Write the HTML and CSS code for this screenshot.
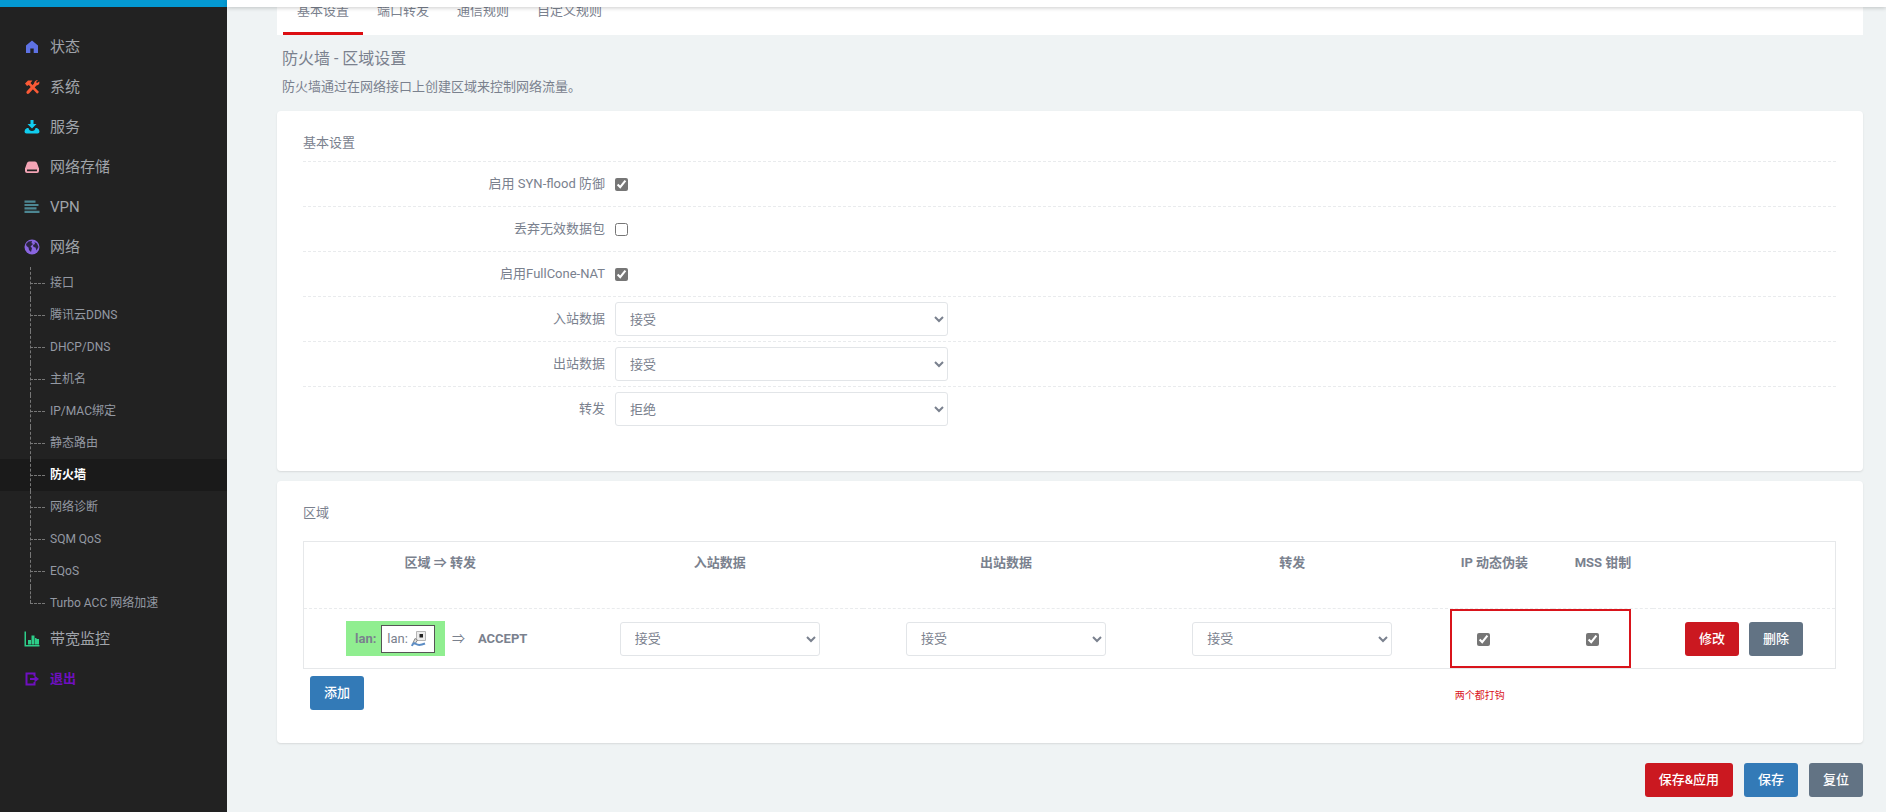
FILE: index.html
```html
<!DOCTYPE html>
<html lang="zh-CN">
<head>
  <meta charset="utf-8">
  <title>防火墙 - 区域设置</title>
  <link rel="stylesheet" href="styles.css">
</head>
<body>
  <header class="topbar">
    <div class="brand"></div>
    <div class="topbar-fill"></div>
  </header>
  <div class="wrapper">
    <aside class="sidebar">
      <ul class="menu">
        <li><a class="menu-link" href="#">
          <svg class="icon" viewBox="0 0 16 16" fill="#5e72e4"><path d="M8 1.500 2 6.500V14h4.300v-4.500h3.400V14H14V6.500z"/></svg>
          状态</a></li>
        <li><a class="menu-link" href="#">
          <svg class="icon" viewBox="0 0 16 16" fill="#fb5a36"><path d="M1 4.500 4 1.500h4.500L6.500 4l8.500 9-1.800 1.700L4.800 6 3 7z"/><path d="M14 1 12 3l1 1 2.300-1.500q.700 3.500-2.800 4L5 14.500q-1.500 1-2.500-.500-.500-1 .500-2l7-7.500Q10.500 1 14 1z"/></svg>
          系统</a></li>
        <li><a class="menu-link" href="#">
          <svg class="icon" viewBox="0 0 16 16" fill="#11cdef"><path d="M6.500 1h3v4h3L8 9.500 3.500 5h3zM3 9h1.500q.500 3 3.500 3t3.500-3H13q2.500 1 2.500 3.500 0 2-2 2h-11q-2 0-2-2Q.500 10 3 9z"/></svg>
          服务</a></li>
        <li><a class="menu-link" href="#">
          <svg class="icon" viewBox="0 0 16 16" fill="#f3a4b5"><path d="M5 2.500h6q1.500 0 2 1.500l2 5.500H1L3 4q.500-1.500 2-1.500z"/><path fill-rule="evenodd" d="M1 9h14v3q0 2-2 2H3q-2 0-2-2zM3 10.500V12.300h10v-1.800z"/></svg>
          网络存储</a></li>
        <li><a class="menu-link" href="#">
          <svg class="icon" viewBox="0 0 16 16" fill="#4d8793"><path d="M.500 1.500h11v2.200H.500zM.500 4.900h14v2.200H.500zM.500 8.300h12v2.200H.500zM.500 11.700h15v2.200H.500z"/></svg>
          VPN</a></li>
        <li>
          <a class="menu-link" href="#">
            <svg class="icon" viewBox="0 0 16 16"><circle cx="8" cy="8" r="7.500" fill="#8965e0"/><path fill="#2c2544" d="M2 5 4.500 2.500 8 2l-.500 2 1.500 1L6.500 7.500 8 9 7 13 5 11 4.500 8.500 2.500 7zM10.500 3l2.500 1.500L14.500 8l-2 3.500-1-3-2-.500-.500-2L11 5z"/></svg>
            网络</a>
          <ul class="submenu">
            <li><a href="#">接口</a></li>
            <li><a href="#">腾讯云DDNS</a></li>
            <li><a href="#">DHCP/DNS</a></li>
            <li><a href="#">主机名</a></li>
            <li><a href="#">IP/MAC绑定</a></li>
            <li><a href="#">静态路由</a></li>
            <li class="active"><a href="#">防火墙</a></li>
            <li><a href="#">网络诊断</a></li>
            <li><a href="#">SQM QoS</a></li>
            <li><a href="#">EQoS</a></li>
            <li><a href="#">Turbo ACC 网络加速</a></li>
          </ul>
        </li>
        <li><a class="menu-link" href="#">
          <svg class="icon" viewBox="0 0 16 16" fill="#2dce89"><path d="M.500.500H2v13.500h13.500v1.500H.500zM4 9h3v4.500H4zM7.500 4.500h3v9h-3zM11 7h1.500v6.500H11zM12.500 8h2.500v5.500h-2.500z"/></svg>
          带宽监控</a></li>
        <li><a class="menu-link logout" href="#">
          <svg class="icon" viewBox="0 0 16 16" fill="none" stroke="#6f0fc0" stroke-width="2"><path d="M10.500 5V2.500h-8v11h8V11M6 8h6"/><path d="M10.500 4.500v7L15 8z" fill="#6f0fc0" stroke="none"/></svg>
          退出</a></li>
      </ul>
    </aside>

    <main class="main">
      <nav class="tabs">
        <a class="active" href="#">基本设置</a>
        <a href="#">端口转发</a>
        <a href="#">通信规则</a>
        <a href="#">自定义规则</a>
      </nav>
      <h2 class="page-title">防火墙 - 区域设置</h2>
      <p class="page-descr">防火墙通过在网络接口上创建区域来控制网络流量。</p>

      <section class="card defaults">
        <h3>基本设置</h3>
        <div class="row">
          <label for="syn">启用 SYN-flood 防御</label>
          <input type="checkbox" id="syn" checked>
        </div>
        <div class="row">
          <label for="invalid">丢弃无效数据包</label>
          <input type="checkbox" id="invalid">
        </div>
        <div class="row">
          <label for="fullcone">启用FullCone-NAT</label>
          <input type="checkbox" id="fullcone" checked>
        </div>
        <div class="row">
          <label for="input">入站数据</label>
          <select id="input"><option>接受</option><option>拒绝</option></select>
        </div>
        <div class="row">
          <label for="output">出站数据</label>
          <select id="output"><option>接受</option><option>拒绝</option></select>
        </div>
        <div class="row">
          <label for="forward">转发</label>
          <select id="forward"><option>拒绝</option><option>接受</option></select>
        </div>
      </section>

      <section class="card zones">
        <h3>区域</h3>
        <div class="table-wrap">
          <table class="zone-table">
            <colgroup>
              <col class="col-zone"><col class="col-policy"><col class="col-policy"><col class="col-policy"><col class="col-masq"><col class="col-mss"><col class="col-actions">
            </colgroup>
            <thead>
              <tr>
                <th>区域 ⇒ 转发</th>
                <th>入站数据</th>
                <th>出站数据</th>
                <th>转发</th>
                <th>IP 动态伪装</th>
                <th>MSS 钳制</th>
                <th></th>
              </tr>
            </thead>
            <tbody>
              <tr>
                <td>
                  <div class="zone">
                    <span class="zone-badge">
                      <strong>lan:</strong>
                      <span class="iface">lan:
                        <svg class="iface-icon" viewBox="0 0 16 16"><path d="M5.500.500h9v9h-9z" fill="#ececec" stroke="#b5b5b5"/><path d="M8.500 3h3.500v3.500H8.500z" fill="#222"/><path d="M4 7.500 6.500 9l-2.500 4-2-1z" fill="#ddd" stroke="#888"/><path d="M1 15q1-4 4-2t9-.500" fill="none" stroke="#5b8cc4" stroke-width="2"/></svg>
                      </span>
                    </span>
                    <span>⇒</span>
                    <strong>ACCEPT</strong>
                  </div>
                </td>
                <td><select aria-label="入站数据"><option>接受</option><option>拒绝</option></select></td>
                <td><select aria-label="出站数据"><option>接受</option><option>拒绝</option></select></td>
                <td><select aria-label="转发"><option>接受</option><option>拒绝</option></select></td>
                <td class="check"><input type="checkbox" aria-label="IP 动态伪装" checked></td>
                <td class="check"><input type="checkbox" aria-label="MSS 钳制" checked></td>
                <td>
                  <div class="actions">
                    <button class="btn red" type="button">修改</button>
                    <button class="btn gray" type="button">删除</button>
                  </div>
                </td>
              </tr>
            </tbody>
          </table>
          <div class="hint">
            <div class="hint-box"></div>
            <span>两个都打钩</span>
          </div>
        </div>
        <button class="btn blue add" type="button">添加</button>
      </section>

      <div class="page-actions">
        <button class="btn red" type="button">保存&amp;应用</button>
        <button class="btn blue" type="button">保存</button>
        <button class="btn gray" type="button">复位</button>
      </div>
    </main>
  </div>
</body>
</html>
```
FILE: styles.css
```css
* {
  box-sizing: border-box;
}

body {
  margin: 0;
  height: 100vh;
  overflow: hidden;
  display: flex;
  flex-direction: column;
  font-family: Roboto, "Noto Sans CJK SC", sans-serif;
  font-size: 13px;
  line-height: 20px;
  color: #7a818e;
  background-color: #eff3f4;
}

a {
  color: inherit;
  text-decoration: none;
}

ul {
  list-style: none;
  margin: 0;
  padding: 0;
}

/* top bar */
.topbar {
  display: flex;
  flex: none;
  height: 7px;
  position: relative;
  z-index: 2;
}

.brand {
  width: 227px;
  background-color: #0499d2;
}

.topbar-fill {
  flex: 1;
  background-color: #fff;
  box-shadow: 0 1px 4px rgba(0, 0, 0, 0.2);
}

.wrapper {
  display: flex;
  flex: 1;
  min-height: 0;
}

/* sidebar */
.sidebar {
  flex: none;
  width: 227px;
  padding-top: 20px;
  background-color: #222;
  position: relative;
  z-index: 3;
}

.menu-link {
  display: flex;
  align-items: center;
  gap: 10px;
  height: 40px;
  padding-left: 24px;
  font-size: 15px;
  color: #a0a4aa;
}

.icon {
  width: 16px;
  height: 16px;
}

.logout {
  font-size: 13px;
  font-weight: bold;
  color: #6f0fc0;
}

.submenu li {
  position: relative;
  height: 32px;
  padding-left: 50px;
  font-size: 12px;
  line-height: 32px;
  color: #9499a3;
}

.submenu li::before {
  content: "";
  position: absolute;
  left: 30px;
  top: 0;
  height: 100%;
  border-left: 1px dashed #777;
}

.submenu li:last-child::before {
  height: 50%;
}

.submenu li::after {
  content: "";
  position: absolute;
  left: 30px;
  top: 16px;
  width: 15px;
  border-top: 1px dashed #777;
}

.submenu .active {
  background-color: #1a1a1a;
  color: #fff;
  font-weight: bold;
}

/* content */
.main {
  flex: 1;
  padding: 0 23px 0 50px;
}

.tabs {
  display: flex;
  align-items: flex-end;
  height: 28px;
  padding-left: 6px;
  background-color: #fff;
}

.tabs a {
  padding: 0 14px;
  line-height: 42px;
  border-bottom: 3px solid transparent;
}

.tabs .active {
  border-bottom-color: #dc0e12;
}

.page-title {
  margin: 12px 5px 6px;
  font-size: 16px;
  font-weight: normal;
  line-height: 24px;
}

.page-descr {
  margin: 0 5px 14px;
}

.card {
  margin-bottom: 10px;
  padding: 22px 27px 0 26px;
  background-color: #fff;
  border-radius: 4px;
  box-shadow: 0 1px 2px rgba(0, 0, 0, 0.1);
}

.card h3 {
  margin: 0;
  font-size: 13px;
  font-weight: normal;
}

.defaults {
  padding-bottom: 40px;
}

.defaults h3 {
  margin-bottom: 8px;
}

.row {
  display: flex;
  align-items: center;
  gap: 10px;
  height: 45px;
  border-top: 1px dashed #e9ebed;
}

.row label {
  width: 302px;
  text-align: right;
}

.row select {
  width: 333px;
}

input[type="checkbox"] {
  width: 13px;
  height: 13px;
  margin: 0;
  vertical-align: middle;
  accent-color: #767676;
}

select {
  width: 200px;
  height: 34px;
  padding: 0 0 0 10px;
  font: inherit;
  color: #7a818e;
  background-color: #fff;
  border: 1px solid #e2e5e8;
  border-radius: 3px;
}

/* zones */
.zones {
  padding-bottom: 33px;
}

.zones h3 {
  margin-bottom: 18px;
}

.table-wrap {
  position: relative;
}

.zone-table {
  width: 100%;
  table-layout: fixed;
  border: 1px solid #e6e8ea;
  border-spacing: 0;
}

.col-zone {
  width: 17.8%;
}

.col-policy {
  width: 18.7%;
}

.col-masq {
  width: 7.7%;
}

.col-mss {
  width: 6.5%;
}

.zone-table th {
  height: 66px;
  padding: 11px 0 0;
  vertical-align: top;
}

.zone-table td {
  height: 60px;
  padding: 0;
  text-align: center;
  vertical-align: middle;
  border-top: 1px dashed #e9ebed;
}

.zone-table .check {
  padding-right: 22px;
}

.zone {
  display: flex;
  align-items: center;
  gap: 7px;
  padding-left: 42px;
}

.zone strong {
  margin-left: 6px;
}

.zone-badge {
  display: flex;
  align-items: center;
  gap: 5px;
  height: 35px;
  padding: 0 10px 0 3px;
  background-color: #90ee90;
}

.iface {
  display: flex;
  align-items: center;
  gap: 3px;
  height: 28px;
  padding: 0 7px 0 5px;
  background-color: #fff;
  border: 1px solid #555;
}

.iface-icon {
  width: 16px;
  height: 16px;
}

.actions {
  display: flex;
  justify-content: center;
  gap: 10px;
}

.btn {
  height: 34px;
  padding: 0 14px;
  font: inherit;
  font-weight: 500;
  color: #fff;
  border: 0;
  border-radius: 3px;
}

.red {
  background-color: #cb1820;
}

.blue {
  background-color: #337ab7;
}

.gray {
  background-color: #627384;
}

.add {
  display: block;
  margin: 7px 0 0 7px;
}

/* marker over the two check boxes */
.hint {
  position: absolute;
  top: 68px;
  left: 74.8%;
  width: 11.8%;
  color: #d9141b;
  font-size: 10px;
}

.hint-box {
  height: 59px;
  margin-bottom: 18px;
  border: 2px solid #d9141b;
}

.hint span {
  margin-left: 5px;
}

.page-actions {
  display: flex;
  justify-content: flex-end;
  gap: 11px;
  padding-top: 10px;
}
```
